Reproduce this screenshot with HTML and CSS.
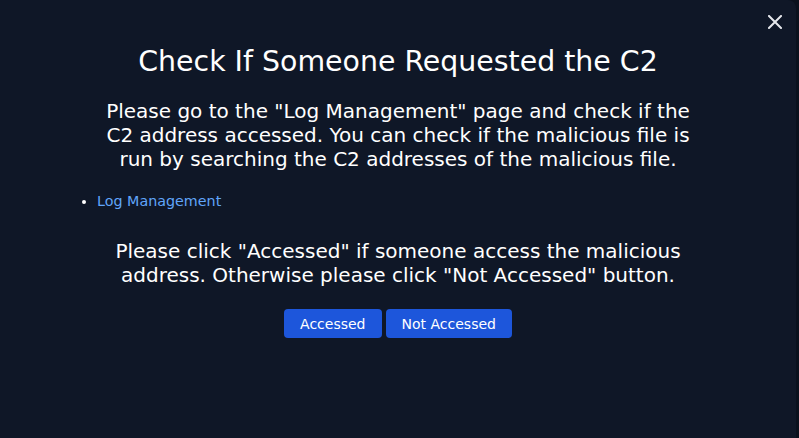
FILE: index.html
```html
<!DOCTYPE html>
<html lang="en">
<head>
<meta charset="utf-8">
<title>Check If Someone Requested the C2</title>
<link rel="stylesheet" href="styles.css">
</head>
<body>
<div class="modal">
  <button class="close" aria-label="Close">
    <svg width="14" height="14" viewBox="0 0 14 14"><path d="M1 1L13 13M13 1L1 13" stroke="#e5e7eb" stroke-width="2" stroke-linecap="square"/></svg>
  </button>
  <h2 class="title">Check If Someone Requested the C2</h2>
  <p class="text">Please go to the "Log Management" page and check if the C2 address accessed. You can check if the malicious file is run by searching the C2 addresses of the malicious file.</p>
  <ul class="links">
    <li><a href="#">Log Management</a></li>
  </ul>
  <p class="text text-2">Please click "Accessed" if someone access the malicious address. Otherwise please click "Not Accessed" button.</p>
  <div class="actions">
    <button class="btn">Accessed</button>
    <button class="btn">Not Accessed</button>
  </div>
</div>
</body>
</html>
```
FILE: styles.css
```css
html, body {
  margin: 0;
  height: 100%;
  background: #0a111d;
}
body {
  font-family: "DejaVu Sans", "Open Sans", sans-serif;
  color: #fff;
}
.modal {
  position: relative;
  box-sizing: border-box;
  width: 796px;
  height: 438px;
  background: #0f1727;
  border-top-right-radius: 8px;
  display: flex;
  flex-direction: column;
  align-items: center;
  padding-top: 44px;
}
.close {
  position: absolute;
  top: 15px;
  right: 14px;
  background: none;
  border: 0;
  padding: 0;
  width: 14px;
  height: 14px;
  cursor: pointer;
}
.close svg { display: block; }
.title {
  margin: 0;
  font-size: 28.4px;
  line-height: 36px;
  font-weight: 500;
}
.text {
  margin: 19px 0 0;
  width: 610px;
  text-align: center;
  font-size: 20px;
  line-height: 24px;
}
.links {
  align-self: stretch;
  margin: 21px 0 0;
  padding-left: 97px;
  font-size: 14.3px;
  line-height: 18px;
}
.links li::marker { color: #fff; }
.links a {
  color: #60a5fa;
  text-decoration: none;
}
.text-2 {
  margin-top: 29px;
}
.actions {
  margin-top: 22px;
  display: flex;
  gap: 4px;
}
.btn {
  background: #1d56db;
  color: #fff;
  border: 0;
  border-radius: 4px;
  font-family: inherit;
  font-size: 14px;
  height: 29px;
  padding: 0 16px;
}
```
